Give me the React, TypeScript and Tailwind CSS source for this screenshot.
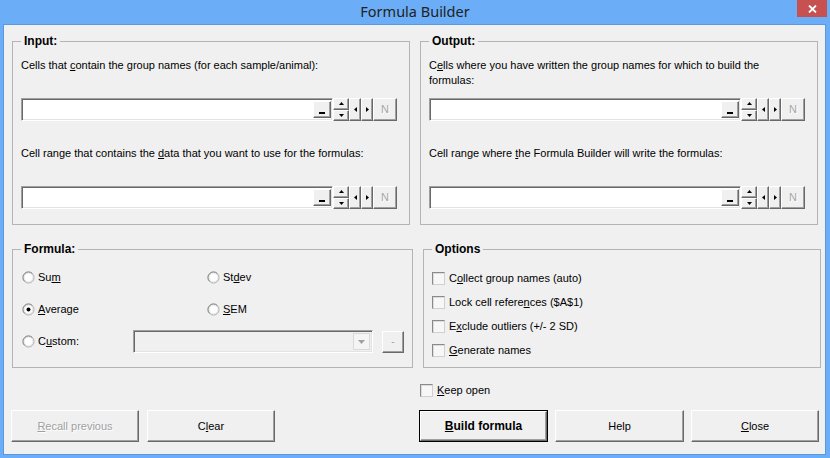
import React from "react";

const raised =
  "border border-t-white border-l-white border-r-[#696969] border-b-[#696969] shadow-[inset_-1px_-1px_0_#a0a0a0] bg-[#f0f0f0]";
const sunken =
  "border border-t-[#a0a0a0] border-l-[#a0a0a0] border-r-white border-b-white shadow-[inset_1px_1px_0_#696969,inset_-1px_-1px_0_#e3e3e3]";

function Tri({ dir, color = "#000" }: { dir: "up" | "down" | "left" | "right"; color?: string }) {
  const horiz = dir === "up" || dir === "down";
  const w = horiz ? 5 : 3;
  const h = horiz ? 3 : 5;
  const pts =
    dir === "up"
      ? "0,3 5,3 2.5,0"
      : dir === "down"
      ? "0,0 5,0 2.5,3"
      : dir === "left"
      ? "3,0 3,5 0,2.5"
      : "0,0 0,5 3,2.5";
  return (
    <svg width={w} height={h} viewBox={`0 0 ${w} ${h}`}>
      <polygon points={pts} fill={color} />
    </svg>
  );
}

function RangeRow() {
  return (
    <div className="flex h-[23px]">
      <div className={`w-[312px] h-full bg-white ${sunken} flex justify-end p-[2px] pr-[1px]`}>
        <div className={`w-[18px] h-full ${raised} flex items-end justify-center pb-[3px]`}>
          <div className="w-[6px] h-[2px] bg-black" />
        </div>
      </div>
      <div className="w-[16px] h-full flex flex-col">
        <div className={`flex-1 ${raised} flex items-center justify-center`}>
          <Tri dir="up" />
        </div>
        <div className={`flex-1 ${raised} flex items-center justify-center`}>
          <Tri dir="down" />
        </div>
      </div>
      <div className={`w-[12px] h-full ${raised} flex items-center justify-center`}>
        <Tri dir="left" />
      </div>
      <div className={`w-[12px] h-full ${raised} flex items-center justify-center`}>
        <Tri dir="right" />
      </div>
      <div
        className={`w-[24px] h-full ${raised} flex items-center justify-center text-[11px] text-[#a6a6a6] [text-shadow:1px_1px_0_#fff]`}
      >
        N
      </div>
    </div>
  );
}

function Radio({ checked }: { checked?: boolean }) {
  return (
    <svg width="13" height="13" viewBox="0 0 13 13" className="shrink-0">
      <circle cx="6.5" cy="6.5" r="5.5" fill="#ffffff" stroke="#a8a8a8" />
      <path d="M2.6 10.4 A5.5 5.5 0 0 1 10.4 2.6" fill="none" stroke="#8a8a8a" />
      <circle cx="6.5" cy="6.5" r="4.3" fill="none" stroke="#e6e6e6" />
      {checked && <circle cx="6.5" cy="6.5" r="2" fill="#000" />}
    </svg>
  );
}

function Check() {
  return (
    <div className="w-[13px] h-[13px] shrink-0 bg-[#f7f7f7] border border-t-[#8a8a8a] border-l-[#8a8a8a] border-r-[#d0d0d0] border-b-[#d0d0d0] shadow-[inset_1px_1px_0_#dcdcdc]" />
  );
}

function Group({
  title,
  className,
  children,
}: {
  title: string;
  className: string;
  children: React.ReactNode;
}) {
  return (
    <fieldset className={`border border-[#b4b4b4] px-[8px] ${className}`}>
      <legend className="px-[3px] font-bold text-[12px] leading-[14px] text-black">{title}</legend>
      {children}
    </fieldset>
  );
}

function Btn({
  children,
  w,
  def,
  disabled,
}: {
  children: React.ReactNode;
  w: string;
  def?: boolean;
  disabled?: boolean;
}) {
  const inner = (
    <div
      className={`h-full w-full ${raised} flex items-center justify-center ${
        disabled ? "text-[#a0a0a0] [text-shadow:1px_1px_0_#fff]" : "text-black"
      } ${def ? "font-bold text-[12px]" : "text-[11px]"}`}
    >
      {children}
    </div>
  );
  return def ? (
    <div className={`${w} h-[32px] border border-black`}>{inner}</div>
  ) : (
    <div className={`${w} h-[32px]`}>{inner}</div>
  );
}

export default function App() {
  return (
    <div
      className="w-[830px] h-[458px] bg-[#6badf6] flex flex-col overflow-hidden"
      style={{ fontFamily: '"Liberation Sans", Arial, sans-serif' }}
    >
      {/* Title bar */}
      <div className="relative h-[24px] flex items-center justify-center shrink-0">
        <span
          className="text-[14.5px] text-[#222] leading-none pb-[1px]"
          style={{ fontFamily: '"Noto Sans", "Open Sans", sans-serif' }}
        >
          Formula Builder
        </span>
        <div className="absolute right-[3px] top-0 w-[30px] h-[17px] bg-[#c75050] flex items-center justify-center">
          <svg width="9" height="8" viewBox="0 0 9 8">
            <path d="M1 0.5 L8 7.5 M8 0.5 L1 7.5" stroke="#fff" strokeWidth="1.8" />
          </svg>
        </div>
      </div>

      {/* Content */}
      <div className="ml-[3px] mr-[4px] mb-[3px] flex-1 border border-[#5a98e0] bg-[#f0f0f0] text-[11px] text-black">
        {/* Row 1 */}
        <div className="flex pl-[8px] gap-[10px] mt-[9px]">
          <Group title="Input:" className="w-[398px] h-[191px]">
            <div className="mt-[10px] h-[30px] leading-[15px]">
              Cells that <u>c</u>ontain the group names (for each sample/animal):
            </div>
            <div className="mt-[10px]">
              <RangeRow />
            </div>
            <div className="mt-[25px] h-[15px] leading-[15px]">
              Cell range that contains the <u>d</u>ata that you want to use for the formulas:
            </div>
            <div className="mt-[25px]">
              <RangeRow />
            </div>
          </Group>
          <Group title="Output:" className="w-[398px] h-[191px]">
            <div className="mt-[10px] h-[30px] leading-[15px]">
              C<u>e</u>lls where you have written the group names for which to build the
              <br />
              formulas:
            </div>
            <div className="mt-[10px]">
              <RangeRow />
            </div>
            <div className="mt-[25px] h-[15px] leading-[15px]">
              Cell range where <u>t</u>he Formula Builder will write the formulas:
            </div>
            <div className="mt-[25px]">
              <RangeRow />
            </div>
          </Group>
        </div>

        {/* Row 2 */}
        <div className="flex pl-[8px] gap-[10px] mt-[17px]">
          <Group title="Formula:" className="w-[398px] h-[126px]">
            <div className="pl-[1px] mt-[5px]">
              <div className="flex items-center h-[32px]">
                <div className="w-[185px] flex items-center gap-[3px]">
                  <Radio />
                  <span>
                    Su<u>m</u>
                  </span>
                </div>
                <div className="flex items-center gap-[3px]">
                  <Radio />
                  <span>
                    St<u>d</u>ev
                  </span>
                </div>
              </div>
              <div className="flex items-center h-[32px]">
                <div className="w-[185px] flex items-center gap-[3px]">
                  <Radio checked />
                  <span>
                    <u>A</u>verage
                  </span>
                </div>
                <div className="flex items-center gap-[3px]">
                  <Radio />
                  <span>
                    <u>S</u>EM
                  </span>
                </div>
              </div>
              <div className="flex items-center h-[33px]">
                <div className="w-[111px] flex items-center gap-[3px]">
                  <Radio />
                  <span>
                    C<u>u</u>stom:
                  </span>
                </div>
                <div className={`w-[240px] h-[23px] bg-[#f0f0f0] ${sunken} flex justify-end p-[2px]`}>
                  <div className="w-[17px] h-full border border-[#d9d9d9] bg-[#f4f4f4] flex items-center justify-center">
                    <svg width="7" height="4" viewBox="0 0 7 4">
                      <polygon points="0,0 7,0 3.5,4" fill="#a0a0a0" />
                    </svg>
                  </div>
                </div>
                <div
                  className={`ml-[9px] w-[22px] h-[22px] ${raised} flex items-center justify-center text-[10px] text-[#a0a0a0]`}
                >
                  -
                </div>
              </div>
            </div>
          </Group>
          <Group title="Options" className="w-[398px] h-[126px]">
            <div className="mt-[10px]">
              <div className="flex items-center gap-[4px] h-[24px]">
                <Check />
                <span>
                  C<u>o</u>llect group names (auto)
                </span>
              </div>
              <div className="flex items-center gap-[4px] h-[24px]">
                <Check />
                <span>
                  Lock cell refere<u>n</u>ces ($A$1)
                </span>
              </div>
              <div className="flex items-center gap-[4px] h-[24px]">
                <Check />
                <span>
                  E<u>x</u>clude outliers (+/- 2 SD)
                </span>
              </div>
              <div className="flex items-center gap-[4px] h-[24px]">
                <Check />
                <span>
                  <u>G</u>enerate names
                </span>
              </div>
            </div>
          </Group>
        </div>

        {/* Keep open */}
        <div className="flex items-center gap-[4px] h-[14px] mt-[15px] ml-[416px]">
          <Check />
          <span>
            <u>K</u>eep open
          </span>
        </div>

        {/* Buttons */}
        <div className="flex mt-[13px] pl-[7px]">
          <Btn w="w-[128px]" disabled>
            <span>
              <u>R</u>ecall previous
            </span>
          </Btn>
          <div className="w-[8px]" />
          <Btn w="w-[128px]">
            <span>
              C<u>l</u>ear
            </span>
          </Btn>
          <div className="w-[144px]" />
          <Btn w="w-[129px]" def>
            <span>
              <u>B</u>uild formula
            </span>
          </Btn>
          <div className="w-[7px]" />
          <Btn w="w-[129px]">Help</Btn>
          <div className="w-[7px]" />
          <Btn w="w-[128px]">
            <span>
              <u>C</u>lose
            </span>
          </Btn>
        </div>
      </div>
    </div>
  );
}
